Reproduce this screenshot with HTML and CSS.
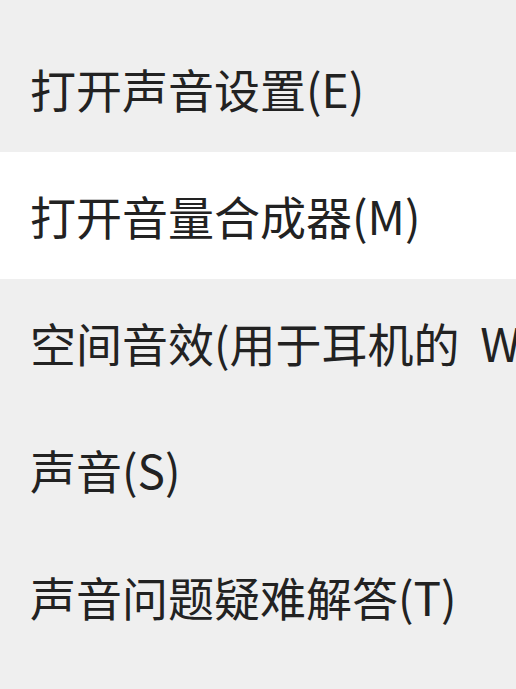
FILE: index.html
```html
<!DOCTYPE html>
<html lang="zh-CN">
<head>
<meta charset="utf-8">
<link rel="stylesheet" href="styles.css">
</head>
<body>
<ul class="menu">
  <li class="item">打开声音设置(E)</li>
  <li class="item active">打开音量合成器(M)</li>
  <li class="item">空间音效(用于耳机的&nbsp; Windows Sonic)</li>
  <li class="item">声音(S)</li>
  <li class="item">声音问题疑难解答(T)</li>
</ul>
</body>
</html>
```
FILE: styles.css
```css
html, body {
  margin: 0;
  padding: 0;
  background: #efefef;
  overflow: hidden;
}
.menu {
  list-style: none;
  margin: 0;
  padding: 25px 0 0 0;
  width: 516px;
  height: 689px;
  box-sizing: border-box;
  overflow: hidden;
}
.item {
  height: 127px;
  line-height: 127px;
  padding-left: 30px;
  font-family: "Noto Sans CJK SC", "Noto Sans", sans-serif;
  font-size: 46px;
  color: #222222;
  white-space: nowrap;
  overflow: hidden;
}
.active {
  background: #ffffff;
}
```
